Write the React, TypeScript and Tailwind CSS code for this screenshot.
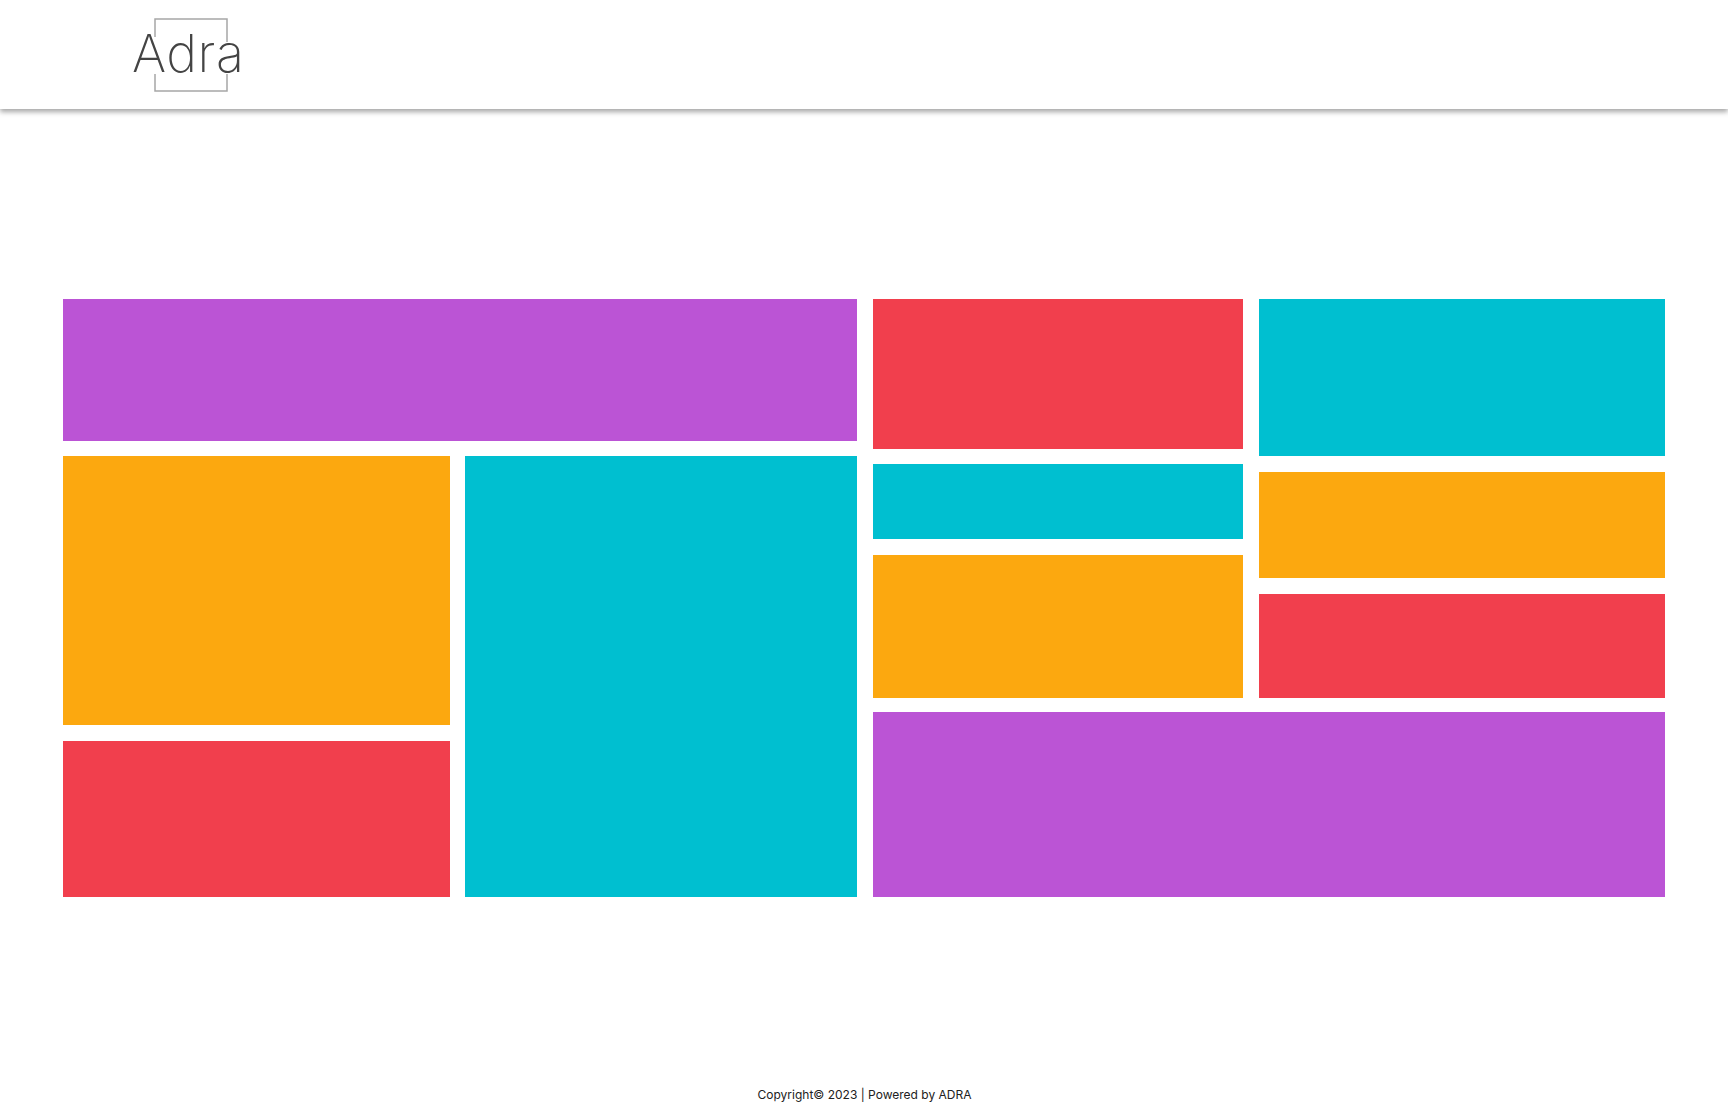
const Block = ({ className }: { className: string }) => <div className={className}></div>

const Logo = () => (
  <div className="relative w-[107px] h-[73px] font-['Inter',sans-serif]">
    <svg className="absolute left-[22px] top-0" width="74" height="74" viewBox="0 0 74 74" fill="none" stroke="#a6a6a6" strokeWidth="1.5">
      <path d="M1 19V1H73V24" />
      <path d="M1 56V73H73V56" />
    </svg>
    <span className="absolute left-0 top-[6px] text-[52px] leading-[60px] font-[250] tracking-[0.6px] text-[#444444]">Adra</span>
  </div>
)

export default function App() {
  return (
    <div className="min-h-[1117px] bg-white font-['Inter',sans-serif]">
      <header className="h-[109px] bg-white pl-[132px] pt-[18px] shadow-[0_3px_5px_rgba(0,0,0,0.35)]">
        <Logo />
      </header>

      <main className="flex gap-4 pl-[63px] pt-[190px]">
        {/* Left half */}
        <div className="w-[794px]">
          <Block className="h-[142px] bg-[#BB54D5]" />
          <div className="mt-[15px] flex gap-[15px]">
            <div className="w-[387px]">
              <Block className="h-[269px] bg-[#FCA80F]" />
              <Block className="mt-4 h-[156px] bg-[#F13F4D]" />
            </div>
            <Block className="h-[441px] w-[392px] bg-[#00BFD0]" />
          </div>
        </div>

        {/* Right half */}
        <div className="w-[792px]">
          <div className="flex gap-4">
            <div className="w-[370px]">
              <Block className="h-[150px] bg-[#F13F4D]" />
              <Block className="mt-[15px] h-[75px] bg-[#00BFD0]" />
              <Block className="mt-4 h-[143px] bg-[#FCA80F]" />
            </div>
            <div className="w-[406px]">
              <Block className="h-[157px] bg-[#00BFD0]" />
              <Block className="mt-4 h-[106px] bg-[#FCA80F]" />
              <Block className="mt-4 h-[104px] bg-[#F13F4D]" />
            </div>
          </div>
          <Block className="mt-[14px] h-[185px] bg-[#BB54D5]" />
        </div>
      </main>

      <footer className="mt-[190px] flex justify-center text-xs leading-4 text-[#212121]">
        <p className="ml-[1px]">Copyright© 2023 | Powered by ADRA</p>
      </footer>
    </div>
  )
}
